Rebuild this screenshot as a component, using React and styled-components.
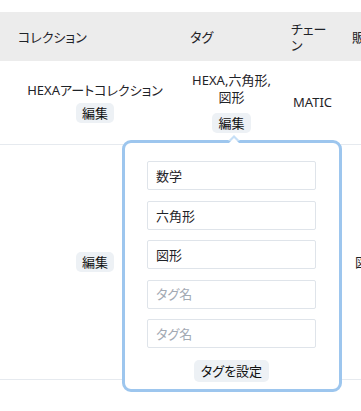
import styled, { createGlobalStyle } from "styled-components";

const GlobalStyle = createGlobalStyle`
  html, body {
    margin: 0;
    padding: 0;
    background: #ffffff;
    overflow: hidden;
  }
  body {
    font-family: "Noto Sans", "Noto Sans CJK JP", sans-serif;
    font-size: 13px;
    font-feature-settings: "palt";
    color: #1f2328;
  }
`;

const Page = styled.div`
  padding-top: 12px;
  width: 361px;
  height: 411px;
  box-sizing: border-box;
  overflow-x: clip;
`;

const Table = styled.div`
  width: 460px;
  position: relative;
`;

const Row = styled.div`
  display: grid;
  grid-template-columns: 172px 101px 61px 126px;
  min-height: ${(p) => p.$height}px;
  background: ${(p) => (p.$head ? "#ececec" : "#ffffff")};
  border-bottom: ${(p) => (p.$head ? "none" : "1px solid #e6eaef")};
`;

const HeadCell = styled.div`
  display: flex;
  align-items: center;
  padding-left: 18px;
  line-height: 16px;
`;

const Cell = styled.div`
  display: flex;
  flex-direction: column;
  align-items: center;
  justify-content: center;
  gap: ${(p) => p.$gap || 4}px;
  padding-left: 18px;
  text-align: center;
  line-height: 17px;
`;

const LeftCell = styled(Cell)`
  align-items: flex-start;
  padding-left: 21px;
`;

const EditButton = styled.button`
  font: inherit;
  font-feature-settings: "palt";
  font-weight: 400;
  color: #111;
  background: #edf1f5;
  border: none;
  border-radius: 5px;
  height: 20px;
  padding: 0 6px;
  line-height: 20px;
  cursor: pointer;
`;

const Popover = styled.div`
  position: absolute;
  left: 122px;
  top: 128px;
  width: 220px;
  box-sizing: border-box;
  padding: 18px 23px 7px 22px;
  background: #ffffff;
  border: 3px solid #9dc6ee;
  border-radius: 9px;
  display: flex;
  flex-direction: column;
  align-items: center;
  gap: 10.5px;

  &::before {
    content: "";
    position: absolute;
    top: -8px;
    left: 103px;
    width: 0;
    height: 0;
    border-left: 6px solid transparent;
    border-right: 6px solid transparent;
    border-bottom: 6px solid #c6dff6;
  }
  &::after {
    content: "";
    position: absolute;
    top: -5px;
    left: 104px;
    width: 0;
    height: 0;
    border-left: 5px solid transparent;
    border-right: 5px solid transparent;
    border-bottom: 5px solid #ffffff;
  }
`;

const TagInput = styled.input`
  width: 169px;
  height: 29px;
  box-sizing: border-box;
  border: 1px solid #dfe4ea;
  border-radius: 2px;
  padding: 0 8px;
  font: inherit;
  font-feature-settings: "palt";
  font-size: 13px;
  color: #1f2328;
  outline: none;

  &::placeholder {
    color: #a3aab4;
  }
`;

const SetButton = styled(EditButton)`
  height: 22px;
  line-height: 22px;
  padding: 0 7px;
  margin-top: 1px;
`;

const tags = ["数学", "六角形", "図形", "", ""];

export default function App() {
  return (
    <Page>
      <GlobalStyle />
      <Table>
        <Row $head $height={49}>
          <HeadCell>コレクション</HeadCell>
          <HeadCell>タグ</HeadCell>
          <HeadCell>チェーン</HeadCell>
          <HeadCell>販売状況</HeadCell>
        </Row>
        <Row $height={83}>
          <Cell>
            <span>HEXAアートコレクション</span>
            <EditButton>編集</EditButton>
          </Cell>
          <Cell $gap={7}>
            <span>HEXA,六角形,図形</span>
            <EditButton>編集</EditButton>
          </Cell>
          <Cell>MATIC</Cell>
          <LeftCell />
        </Row>
        <Row $height={234}>
          <Cell>
            <EditButton>編集</EditButton>
          </Cell>
          <Cell />
          <Cell />
          <LeftCell>図形アート</LeftCell>
        </Row>
        <Popover>
          {tags.map((t, i) => (
            <TagInput key={i} defaultValue={t} placeholder="タグ名" />
          ))}
          <SetButton>タグを設定</SetButton>
        </Popover>
      </Table>
    </Page>
  );
}
